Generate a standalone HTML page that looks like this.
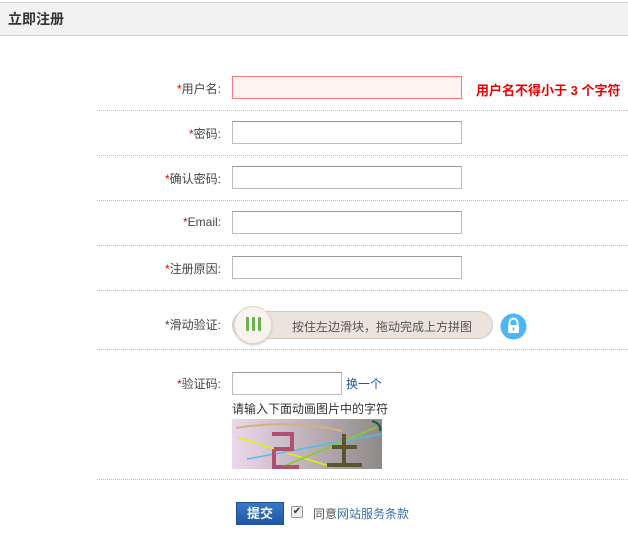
<!DOCTYPE html>
<html><head><meta charset="utf-8"><style>
*{margin:0;padding:0;box-sizing:border-box}
body{width:628px;height:549px;background:#fff;font-family:"Liberation Sans","Noto Sans CJK SC",sans-serif;font-size:12px;color:#333;position:relative;overflow:hidden}
.hd{position:absolute;left:0;top:2px;width:628px;height:34px;background:#f2f2f2;border-top:1px solid #d0d0d0;border-bottom:1px solid #d0d0d0;font-size:14px;font-weight:bold;line-height:32px;padding-left:8px;color:#333}
.sep{position:absolute;left:97px;width:531px;border-top:1px dotted #bbb}
.lb{position:absolute;right:407px;text-align:right;color:#444;white-space:nowrap}
.lb b{color:#e00;font-weight:normal}
.in{position:absolute;left:232px;width:230px;height:23px;border:1px solid #bbb;border-top-color:#999;background:#fff}
.abs{position:absolute;white-space:nowrap}
</style></head><body>
<div class="hd">立即注册</div>

<div class="lb" style="top:80px"><b>*</b>用户名:</div>
<div class="in" style="top:76px;background:#fdf3f3;border:1px solid #f77"></div>
<div class="abs" style="left:476px;top:80px;color:#e00;font-weight:bold;font-size:13px">用户名不得小于 3 个字符</div>
<div class="sep" style="top:110px"></div>

<div class="lb" style="top:125px"><b>*</b>密码:</div>
<div class="in" style="top:121px"></div>
<div class="sep" style="top:155px"></div>

<div class="lb" style="top:170px"><b>*</b>确认密码:</div>
<div class="in" style="top:166px"></div>
<div class="sep" style="top:200px"></div>

<div class="lb" style="top:215px"><b>*</b>Email:</div>
<div class="in" style="top:211px"></div>
<div class="sep" style="top:245px"></div>

<div class="lb" style="top:260px"><b>*</b>注册原因:</div>
<div class="in" style="top:256px"></div>
<div class="sep" style="top:290px"></div>

<div class="lb" style="top:316px"><b style="color:#444">*</b>滑动验证:</div>
<div class="abs" style="left:232px;top:311px;width:261px;height:28px;border-radius:14px;background:#ece4dc;border:1px solid #d4c8bc"></div>
<div class="abs" style="left:234px;top:306px;width:38px;height:38px;border-radius:50%;background:#f7f3ee;border:1px solid #e0d6cc;box-shadow:0 1px 2px #cbbfb2"></div>
<div class="abs" style="left:246px;top:317px;width:3px;height:14px;background:#6ab04c;border-radius:1px"></div>
<div class="abs" style="left:252px;top:317px;width:3px;height:14px;background:#6ab04c;border-radius:1px"></div>
<div class="abs" style="left:258px;top:317px;width:3px;height:14px;background:#6ab04c;border-radius:1px"></div>
<div class="abs" style="left:292px;top:318px;color:#555">按住左边滑块，拖动完成上方拼图</div>
<svg class="abs" style="left:500px;top:313px" width="27" height="27" viewBox="0 0 27 27"><circle cx="13.5" cy="13.5" r="13" fill="#4bb6f8"/><path d="M9.5 12v-2.5a4 4 0 0 1 8 0V12" fill="none" stroke="#fff" stroke-width="2"/><rect x="8" y="12" width="11" height="8" rx="1" fill="#fff"/><rect x="12.7" y="14.5" width="1.6" height="3" fill="#4bb6f8"/></svg>
<div class="sep" style="top:349px"></div>

<div class="lb" style="top:375px"><b>*</b>验证码:</div>
<div class="in" style="top:372px;width:110px"></div>
<div class="abs" style="left:346px;top:375px;color:#1a5a9a">换一个</div>
<div class="abs" style="left:232px;top:400px;color:#333">请输入下面动画图片中的字符</div>
<svg class="abs" style="left:232px;top:419px" width="150" height="50"><defs><linearGradient id="g" x1="0" x2="1"><stop offset="0" stop-color="#ecd8ec"/><stop offset="1" stop-color="#8e8a88"/></linearGradient></defs><rect width="150" height="50" fill="url(#g)"/><path d="M4 9 Q60 0 110 12" stroke="#d6b07a" stroke-width="2" fill="none"/><path d="M5 18 L100 48" stroke="#e8f000" stroke-width="1.5"/><path d="M15 40 L150 15" stroke="#55bbee" stroke-width="1.5"/><path d="M50 48 L145 8" stroke="#88cc22" stroke-width="1.5"/><path d="M40 15 h20 v15 h-18 M42 30 v18 h25" stroke="#b05070" stroke-width="4" fill="none"/><path d="M100 28 h25 M112 15 v30 M95 46 h35" stroke="#5a5530" stroke-width="4" fill="none"/><path d="M140 2 Q150 5 148 12" stroke="#1a5a3a" stroke-width="2" fill="none"/></svg>
<div class="sep" style="top:479px"></div>

<div class="abs" style="left:236px;top:502px;width:48px;height:23px;background:linear-gradient(#3a78c4,#1e56a6);border:1px solid #1b4f96;color:#fff;font-weight:bold;font-size:13px;text-align:center;line-height:21px">提交</div>
<div class="abs" style="left:291px;top:506px;width:12px;height:12px;border:1px solid #999;border-radius:2px;background:#eee;font-size:10px;line-height:10px;text-align:center;color:#333">✔</div>
<div class="abs" style="left:313px;top:505px;color:#555">同意<span style="color:#3a6ea5">网站服务条款</span></div>
</body></html>
